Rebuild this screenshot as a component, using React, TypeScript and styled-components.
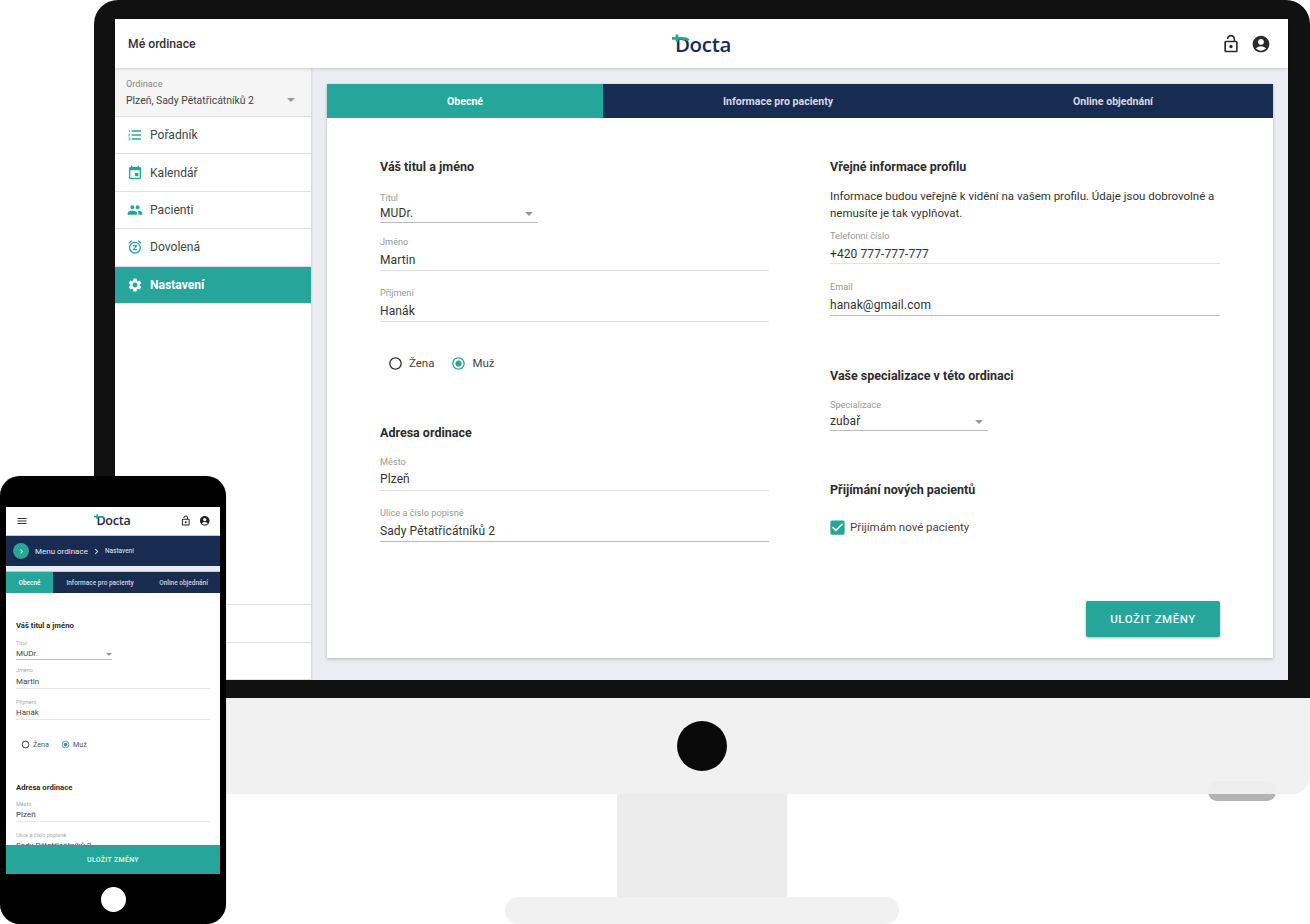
import React from 'react';
import styled, { createGlobalStyle } from 'styled-components';
import {
  MdAccountCircle,
  MdChevronRight,
  MdEvent,
  MdFormatListNumbered,
  MdLockOpen,
  MdMenu,
  MdPeople,
  MdRadioButtonChecked,
  MdRadioButtonUnchecked,
  MdSettings,
  MdSnooze,
  MdCheckBox,
} from 'react-icons/md';

const TEAL = '#26a69a';
const NAVY = '#182c52';

const GlobalStyle = createGlobalStyle`
  html, body {
    margin: 0;
    padding: 0;
    background: #fff;
    font-family: Roboto, "Liberation Sans", sans-serif;
    color: #333;
  }
`;

const Stage = styled.div`
  position: relative;
  width: 1310px;
  height: 924px;
  overflow: hidden;
  background: #fff;
`;

/* monitor */
const Monitor = styled.div`
  margin-left: 94px;
  width: 1216px;
  display: flex;
  flex-direction: column;
  align-items: center;
`;

const Bezel = styled.div`
  box-sizing: border-box;
  width: 100%;
  height: 698px;
  padding: 19px 22px 18px 21px;
  background: #111;
  border-radius: 24px 24px 0 0;
`;

const Chin = styled.div`
  position: relative;
  z-index: 1;
  width: 100%;
  height: 96px;
  display: flex;
  justify-content: center;
  padding-top: 23px;
  box-sizing: border-box;
  background: #f1f1f1;
  border-radius: 0 0 18px 18px;
`;

const Camera = styled.div`
  width: 50px;
  height: 50px;
  border-radius: 50%;
  background: #0a0a0a;
`;

const Foot = styled.div`
  position: absolute;
  left: 1114px;
  top: 83px;
  width: 68px;
  height: 20px;
  border-radius: 9px;
  background: linear-gradient(#ededed 0 13px, #b3b3b3 13px);
`;

const Stand = styled.div`
  width: 170px;
  height: 103px;
  background: #ececec;
`;

const Base = styled.div`
  width: 394px;
  height: 27px;
  background: #f1f1f1;
  border-radius: 14px;
`;

const Screen = styled.div`
  height: 100%;
  display: flex;
  flex-direction: column;
  background: #ecedf2;
`;

const TopBar = styled.header`
  position: relative;
  z-index: 2;
  height: 49px;
  flex: none;
  display: grid;
  grid-template-columns: 1fr auto 1fr;
  align-items: center;
  padding: 0 13px;
  background: #fff;
  box-shadow: 0 1px 3px rgba(0, 0, 0, 0.16);
`;

const TopTitle = styled.div`
  font-size: 12.2px;
  font-weight: 500;
  color: #333;
`;

const TopIcons = styled.div`
  justify-self: end;
  display: flex;
  align-items: center;
  gap: 10px;
  margin-right: 4px;
  color: #2b2b2b;
  font-size: 20px;

  svg {
    display: block;
  }
`;

const LogoWrap = styled.div<{ $small?: boolean }>`
  position: relative;
  margin-left: ${(p) => (p.$small ? '1px' : '3px')};
  font-family: "Open Sans", "Noto Sans", sans-serif;
  font-weight: 600;
  font-size: ${(p) => (p.$small ? '12.5px' : '20.5px')};
  line-height: ${(p) => (p.$small ? '16px' : '24px')};
  letter-spacing: ${(p) => (p.$small ? '-0.2px' : '-0.3px')};
  color: ${NAVY};

  svg {
    position: absolute;
    display: block;
    left: ${(p) => (p.$small ? '-2px' : '-3px')};
    top: ${(p) => (p.$small ? '1px' : '2px')};
  }
`;

const Logo = ({ small }: { small?: boolean }) => {
  const s = small ? 0.62 : 1;
  return (
    <LogoWrap $small={small}>
      Docta
      <svg width={20 * s} height={14 * s} viewBox="0 0 20 14" fill="none">
        <path d="M0 4.4h10c3.2 0 5 .4 6.6 2" stroke={TEAL} strokeWidth="2.6" />
        <path d="M5 .4v7.6" stroke={TEAL} strokeWidth="2.6" />
      </svg>
    </LogoWrap>
  );
};

const Content = styled.div`
  flex: 1;
  min-height: 0;
  display: flex;
`;

const Sidebar = styled.aside`
  width: 196px;
  flex: none;
  display: flex;
  flex-direction: column;
  background: #fff;
  box-shadow: 1px 0 2px rgba(0, 0, 0, 0.1);
`;

const OfficeSelect = styled.div`
  position: relative;
  box-sizing: border-box;
  height: 49px;
  padding: 10px 11px 0;
  background: #f5f5f5;
  border-bottom: 1px solid #e0e0e0;
`;

const OfficeLabel = styled.div`
  font-size: 9.2px;
  line-height: 12px;
  color: #888;
`;

const OfficeValue = styled.div`
  margin-top: 4px;
  font-size: 10.4px;
  line-height: 14px;
  color: #444;
`;

const Caret = styled.span<{ $small?: boolean }>`
  position: absolute;
  right: ${(p) => (p.$small ? '0' : '5px')};
  bottom: ${(p) => (p.$small ? '4px' : '7px')};
  width: 0;
  height: 0;
  border-style: solid;
  border-color: #999 transparent transparent;
  border-width: ${(p) => (p.$small ? '3px 3px 0' : '4.5px 4.5px 0')};
`;

const OfficeCaret = styled(Caret)`
  right: 16px;
  bottom: 14px;
`;

const MenuItem = styled.div<{ $active?: boolean }>`
  box-sizing: border-box;
  height: 37.4px;
  display: flex;
  align-items: center;
  gap: 7px;
  padding-left: 12px;
  border-bottom: 1px solid #e0e0e0;
  font-size: 12.1px;
  font-weight: ${(p) => (p.$active ? 700 : 400)};
  color: ${(p) => (p.$active ? '#fff' : '#444')};
  background: ${(p) => (p.$active ? TEAL : '#fff')};

  svg {
    flex: none;
    font-size: 16px;
    color: ${(p) => (p.$active ? '#fff' : TEAL)};
  }
`;

const SidebarBottom = styled.div`
  margin-top: auto;
  height: 76px;
  border-top: 1px solid #e0e0e0;
  box-sizing: border-box;
  display: flex;
  flex-direction: column;
`;

const BottomRow = styled.div`
  height: 37px;
  border-bottom: 1px solid #e0e0e0;
`;

const Main = styled.main`
  flex: 1;
  min-width: 0;
  padding: 16px 15px 22px 16px;
`;

const Card = styled.section`
  height: 100%;
  display: flex;
  flex-direction: column;
  background: #fff;
  box-shadow: 0 1px 3px rgba(0, 0, 0, 0.25);
`;

const Tabs = styled.div`
  height: 34px;
  flex: none;
  display: grid;
  grid-template-columns: 276px 350px 1fr;
  background: ${NAVY};
`;

const Tab = styled.div<{ $active?: boolean }>`
  display: flex;
  align-items: center;
  justify-content: center;
  font-size: 10.6px;
  font-weight: 700;
  color: ${(p) => (p.$active ? '#fff' : '#d5d9e2')};
  background: ${(p) => (p.$active ? TEAL : 'transparent')};
`;

const FormColumns = styled.div`
  flex: 1;
  display: grid;
  grid-template-columns: 389px 390px;
  column-gap: 61px;
  padding: 41px 53px 0;
`;

const Column = styled.div`
  display: flex;
  flex-direction: column;
`;

const Heading = styled.h3<{ $top?: number }>`
  margin: ${(p) => p.$top ?? 0}px 0 0;
  font-size: 12.5px;
  line-height: 16px;
  font-weight: 700;
  color: #2c2c2c;
`;

const Paragraph = styled.p`
  margin: 13px 0 0;
  font-size: 11.5px;
  line-height: 17px;
  color: #333;
`;

const FieldBox = styled.div<{ $top: number; $narrow?: boolean }>`
  position: relative;
  margin-top: ${(p) => p.$top}px;
  width: ${(p) => (p.$narrow ? '158px' : '100%')};
`;

const FieldLabel = styled.div`
  font-size: 9.2px;
  line-height: 12px;
  color: #999;
`;

const FieldValue = styled.div<{ $gap: number; $pad: number; $strong?: boolean }>`
  margin-top: ${(p) => p.$gap}px;
  padding-bottom: ${(p) => p.$pad}px;
  font-size: 12px;
  line-height: 18px;
  letter-spacing: 0.1px;
  color: #333;
  border-bottom: 1px solid ${(p) => (p.$strong ? '#bdbdbd' : '#e2e2e2')};
`;

type FieldProps = {
  label: string;
  value: string;
  top: number;
  gap?: number;
  pad?: number;
  select?: boolean;
};

const Field = ({ label, value, top, gap = 2, pad = 2, select }: FieldProps) => (
  <FieldBox $top={top} $narrow={select}>
    <FieldLabel>{label}</FieldLabel>
    <FieldValue $gap={gap} $pad={pad} $strong={select || label === 'Email' || label === 'Ulice a číslo popisné'}>
      {value}
    </FieldValue>
    {select && <Caret />}
  </FieldBox>
);

const Radios = styled.div`
  margin-top: 31px;
  height: 20px;
  display: flex;
  align-items: center;
  padding-left: 8px;
  gap: 17px;
`;

const RadioItem = styled.div<{ $on?: boolean }>`
  display: flex;
  align-items: center;
  gap: 6px;
  font-size: 11.5px;
  color: #444;

  svg {
    font-size: 15px;
    color: ${(p) => (p.$on ? TEAL : '#2b2b2b')};
  }
`;

const CheckRow = styled.div`
  margin-top: 19px;
  height: 20px;
  display: flex;
  align-items: center;
  gap: 3px;
  margin-left: -2px;
  font-size: 11.5px;
  color: #444;

  svg {
    font-size: 19px;
    color: ${TEAL};
  }
`;

const CardFooter = styled.div`
  display: flex;
  justify-content: flex-end;
  padding: 0 53px 21px;
`;

const SaveButton = styled.button`
  width: 134px;
  height: 36px;
  border: 0;
  border-radius: 2px;
  background: ${TEAL};
  color: #f2fbfa;
  font-family: inherit;
  font-size: 11.5px;
  font-weight: 500;
  letter-spacing: 0.5px;
  box-shadow: 0 1px 3px rgba(0, 0, 0, 0.3);
`;

/* phone */
const Phone = styled.div`
  position: absolute;
  z-index: 3;
  left: 0;
  top: 476px;
  box-sizing: border-box;
  width: 226px;
  height: 448px;
  padding: 31px 6px 0;
  display: flex;
  flex-direction: column;
  background: #000;
  border-radius: 20px;
  box-shadow: 0 0 1px rgba(0, 0, 0, 0.5);
`;

const PhoneScreen = styled.div`
  height: 367px;
  flex: none;
  display: flex;
  flex-direction: column;
  background: #fff;
  overflow: hidden;
`;

const PhoneBar = styled.div`
  box-sizing: border-box;
  height: 29px;
  flex: none;
  display: grid;
  grid-template-columns: 1fr auto 1fr;
  align-items: center;
  padding: 0 10px;
  background: #fff;
  border-bottom: 1px solid #c4c6cc;
`;

const PhoneBarIcons = styled.div`
  justify-self: end;
  display: flex;
  gap: 7px;
  font-size: 11.5px;
  color: #222;

  svg {
    display: block;
  }
`;

const MenuButton = styled.div`
  font-size: 12px;
  color: #333;

  svg {
    display: block;
  }
`;

const Crumbs = styled.div`
  height: 30px;
  flex: none;
  display: flex;
  align-items: center;
  padding-left: 7px;
  background: ${NAVY};
  color: #e6e9ef;
  font-size: 8px;
`;

const CrumbCircle = styled.div`
  width: 16px;
  height: 16px;
  border-radius: 50%;
  display: flex;
  align-items: center;
  justify-content: center;
  margin-right: 6px;
  background: ${TEAL};
  color: #fff;
  font-size: 9px;
  box-shadow: 0 1px 2px rgba(0, 0, 0, 0.4);
`;

const CrumbArrow = styled.span`
  display: flex;
  margin: 0 3px;
  font-size: 11px;
`;

const CrumbCurrent = styled.span`
  font-size: 6.5px;
`;

const PhoneBand = styled.div`
  height: 5px;
  flex: none;
  background: #ecedf2;
  border-bottom: 1px solid #c4c6cc;
`;

const PhoneTabs = styled.div`
  height: 21px;
  flex: none;
  display: grid;
  grid-template-columns: 47px 94px 1fr;
  background: ${NAVY};
`;

const PhoneTab = styled.div<{ $active?: boolean }>`
  display: flex;
  align-items: center;
  justify-content: center;
  font-size: 6.5px;
  font-weight: 500;
  white-space: nowrap;
  color: ${(p) => (p.$active ? '#fff' : '#cfd4de')};
  background: ${(p) => (p.$active ? TEAL : 'transparent')};
`;

const PhoneForm = styled.div`
  flex: 1;
  min-height: 0;
  overflow: hidden;
  padding: 28px 10px 0;
  display: flex;
  flex-direction: column;
`;

const PhoneHeading = styled.div<{ $top?: number }>`
  flex: none;
  margin-top: ${(p) => p.$top ?? 0}px;
  font-size: 7.7px;
  line-height: 10px;
  font-weight: 700;
  color: #2c2c2c;
`;

const PhoneField = styled.div<{ $top: number; $narrow?: boolean }>`
  position: relative;
  flex: none;
  margin-top: ${(p) => p.$top}px;
  width: ${(p) => (p.$narrow ? '96px' : '100%')};
`;

const PhoneLabel = styled.div`
  font-size: 5.5px;
  line-height: 8px;
  color: #aaa;
`;

const PhoneValue = styled.div<{ $gap: number; $pad: number; $strong?: boolean }>`
  margin-top: ${(p) => p.$gap}px;
  padding-bottom: ${(p) => p.$pad}px;
  font-size: 8px;
  line-height: 10px;
  color: #444;
  border-bottom: 1px solid ${(p) => (p.$strong ? '#bdbdbd' : '#e6e6e6')};
`;

const PhoneRadios = styled.div`
  flex: none;
  margin-top: 18px;
  height: 12px;
  display: flex;
  align-items: center;
  padding-left: 5px;
  gap: 12px;
`;

const PhoneRadio = styled.div<{ $on?: boolean }>`
  display: flex;
  align-items: center;
  gap: 3px;
  font-size: 7.2px;
  color: #555;

  svg {
    font-size: 9px;
    color: ${(p) => (p.$on ? TEAL : '#222')};
  }
`;

const PhoneSave = styled.div`
  height: 29px;
  flex: none;
  display: flex;
  align-items: center;
  justify-content: center;
  background: ${TEAL};
  color: #e9f7f5;
  font-size: 7px;
  font-weight: 500;
  letter-spacing: 0.3px;
`;

const PhoneChin = styled.div`
  flex: 1;
  display: flex;
  align-items: center;
  justify-content: center;
`;

const HomeButton = styled.div`
  width: 25px;
  height: 25px;
  border-radius: 50%;
  background: #fff;
`;

const menu = [
  { label: 'Pořadník', icon: <MdFormatListNumbered /> },
  { label: 'Kalendář', icon: <MdEvent /> },
  { label: 'Pacienti', icon: <MdPeople /> },
  { label: 'Dovolená', icon: <MdSnooze /> },
  { label: 'Nastavení', icon: <MdSettings />, active: true },
];

const PhoneView = () => (
  <Phone>
    <PhoneScreen>
      <PhoneBar>
        <MenuButton><MdMenu /></MenuButton>
        <Logo small />
        <PhoneBarIcons>
          <MdLockOpen />
          <MdAccountCircle />
        </PhoneBarIcons>
      </PhoneBar>
      <Crumbs>
        <CrumbCircle><MdChevronRight /></CrumbCircle>
        Menu ordinace
        <CrumbArrow><MdChevronRight /></CrumbArrow>
        <CrumbCurrent>Nastavení</CrumbCurrent>
      </Crumbs>
      <PhoneBand />
      <PhoneTabs>
        <PhoneTab $active>Obecné</PhoneTab>
        <PhoneTab>Informace pro pacienty</PhoneTab>
        <PhoneTab>Online objednání</PhoneTab>
      </PhoneTabs>
      <PhoneForm>
        <PhoneHeading>Váš titul a jméno</PhoneHeading>
        <PhoneField $top={8} $narrow>
          <PhoneLabel>Titul</PhoneLabel>
          <PhoneValue $gap={2} $pad={0} $strong>MUDr.</PhoneValue>
          <Caret $small />
        </PhoneField>
        <PhoneField $top={6}>
          <PhoneLabel>Jméno</PhoneLabel>
          <PhoneValue $gap={3} $pad={1}>Martin</PhoneValue>
        </PhoneField>
        <PhoneField $top={9}>
          <PhoneLabel>Příjmení</PhoneLabel>
          <PhoneValue $gap={2} $pad={1}>Hanák</PhoneValue>
        </PhoneField>
        <PhoneRadios>
          <PhoneRadio><MdRadioButtonUnchecked />Žena</PhoneRadio>
          <PhoneRadio $on><MdRadioButtonChecked />Muž</PhoneRadio>
        </PhoneRadios>
        <PhoneHeading $top={33}>Adresa ordinace</PhoneHeading>
        <PhoneField $top={7}>
          <PhoneLabel>Město</PhoneLabel>
          <PhoneValue $gap={2} $pad={1}>Plzeň</PhoneValue>
        </PhoneField>
        <PhoneField $top={9}>
          <PhoneLabel>Ulice a číslo popisné</PhoneLabel>
          <PhoneValue $gap={2} $pad={1}>Sady Pětatřicátníků 2</PhoneValue>
        </PhoneField>
      </PhoneForm>
      <PhoneSave>ULOŽIT ZMĚNY</PhoneSave>
    </PhoneScreen>
    <PhoneChin>
      <HomeButton />
    </PhoneChin>
  </Phone>
);

const App = () => (
  <Stage>
    <GlobalStyle />
    <Monitor>
      <Bezel>
        <Screen>
          <TopBar>
            <TopTitle>Mé ordinace</TopTitle>
            <Logo />
            <TopIcons>
              <MdLockOpen />
              <MdAccountCircle />
            </TopIcons>
          </TopBar>
          <Content>
            <Sidebar>
              <OfficeSelect>
                <OfficeLabel>Ordinace</OfficeLabel>
                <OfficeValue>Plzeň, Sady Pětatřicátníků 2</OfficeValue>
                <OfficeCaret />
              </OfficeSelect>
              {menu.map((item) => (
                <MenuItem key={item.label} $active={item.active}>
                  {item.icon}
                  {item.label}
                </MenuItem>
              ))}
              <SidebarBottom>
                <BottomRow />
                <BottomRow />
              </SidebarBottom>
            </Sidebar>
            <Main>
              <Card>
                <Tabs>
                  <Tab $active>Obecné</Tab>
                  <Tab>Informace pro pacienty</Tab>
                  <Tab>Online objednání</Tab>
                </Tabs>
                <FormColumns>
                  <Column>
                    <Heading>Váš titul a jméno</Heading>
                    <Field label="Titul" value="MUDr." top={17} gap={0} pad={0} select />
                    <Field label="Jméno" value="Martin" top={13} gap={3} pad={1} />
                    <Field label="Příjmení" value="Hanák" top={16} gap={3} pad={1} />
                    <Radios>
                      <RadioItem><MdRadioButtonUnchecked />Žena</RadioItem>
                      <RadioItem $on><MdRadioButtonChecked />Muž</RadioItem>
                    </Radios>
                    <Heading $top={52}>Adresa ordinace</Heading>
                    <Field label="Město" value="Plzeň" top={15} pad={2} />
                    <Field label="Ulice a číslo popisné" value="Sady Pětatřicátníků 2" top={16} gap={3} pad={1} />
                  </Column>
                  <Column>
                    <Heading>Vřejné informace profilu</Heading>
                    <Paragraph>
                      Informace budou veřejně k vidění na vašem profilu. Údaje jsou dobrovolné a
                      nemusíte je tak vyplňovat.
                    </Paragraph>
                    <Field label="Telefonní číslo" value="+420 777-777-777" top={8} gap={3} pad={0} />
                    <Field label="Email" value="hanak@gmail.com" top={17} gap={3} pad={1} />
                    <Heading $top={52}>Vaše specializace v této ordinaci</Heading>
                    <Field label="Specializace" value="zubař" top={15} gap={1} pad={0} select />
                    <Heading $top={51}>Přijímání nových pacientů</Heading>
                    <CheckRow>
                      <MdCheckBox />
                      Přijímám nové pacienty
                    </CheckRow>
                  </Column>
                </FormColumns>
                <CardFooter>
                  <SaveButton>ULOŽIT ZMĚNY</SaveButton>
                </CardFooter>
              </Card>
            </Main>
          </Content>
        </Screen>
      </Bezel>
      <Chin>
        <Camera />
        <Foot />
      </Chin>
      <Stand />
      <Base />
    </Monitor>
    <PhoneView />
  </Stage>
);

export default App;
